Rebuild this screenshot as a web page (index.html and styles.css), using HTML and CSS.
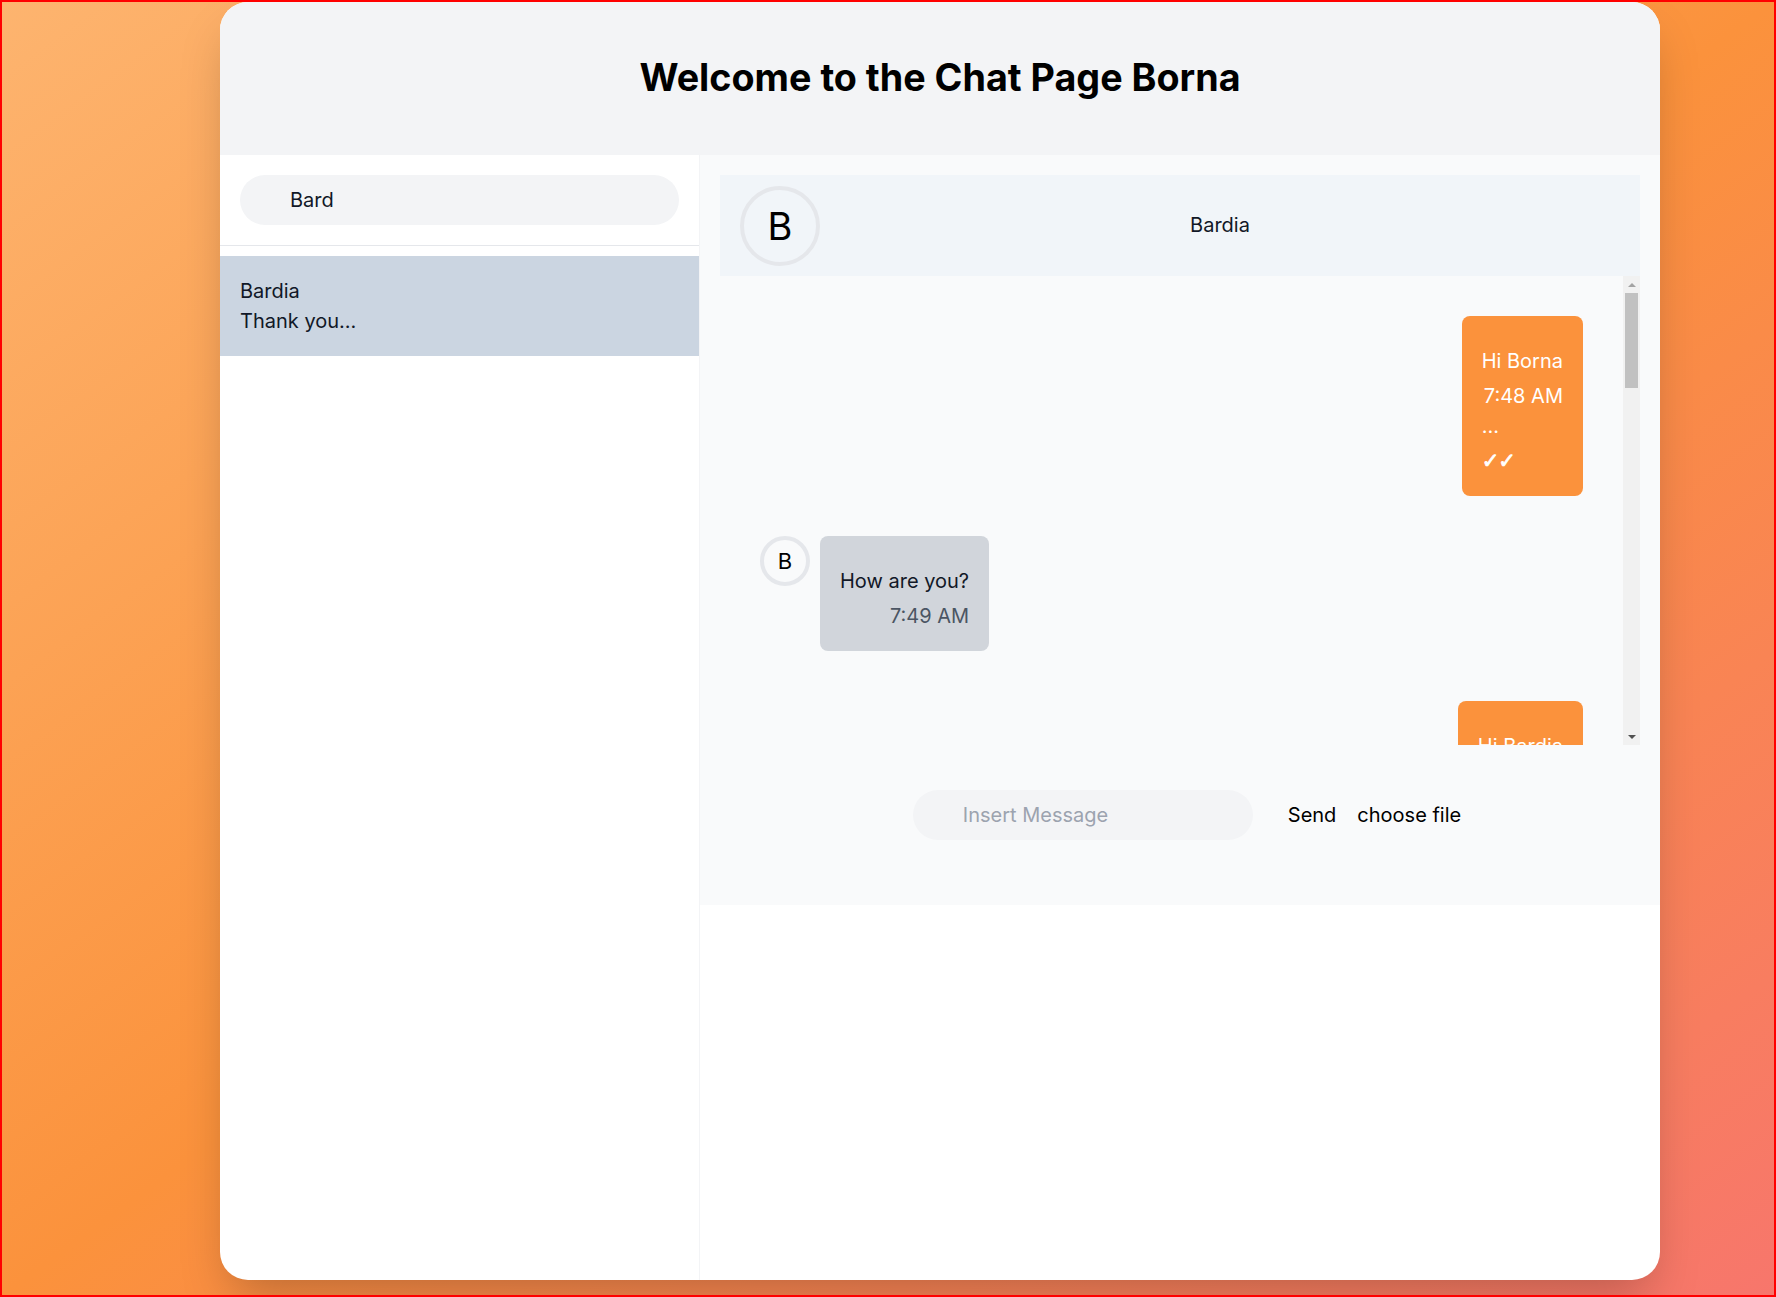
FILE: index.html
```html
<!DOCTYPE html>
<html lang="en">
<head>
<meta charset="utf-8">
<title>Chat Page</title>
<link rel="stylesheet" href="styles.css">
</head>
<body>
<div class="card">
  <header class="card-header">
    <h1 class="title">Welcome to the Chat Page Borna</h1>
  </header>
  <div class="card-body">
    <aside class="sidebar">
      <div class="search-wrap">
        <input class="search" type="text" value="Bard">
      </div>
      <ul class="contacts">
        <li class="contact active">
          <div class="contact-name">Bardia</div>
          <div class="contact-last">Thank you...</div>
        </li>
      </ul>
    </aside>
    <section class="chat">
      <div class="chat-header">
        <div class="avatar avatar-lg">B</div>
        <div class="chat-title">Bardia</div>
      </div>
      <div class="messages-wrap">
        <div class="messages">
          <div class="row out">
            <div class="bubble">
              <div class="msg-text">Hi Borna</div>
              <div class="msg-time">7:48 AM</div>
              <div class="msg-status">...</div>
              <div class="msg-check">✓✓</div>
            </div>
          </div>
          <div class="row in">
            <div class="avatar avatar-sm">B</div>
            <div class="bubble">
              <div class="msg-text">How are you?</div>
              <div class="msg-time">7:49 AM</div>
            </div>
          </div>
          <div class="row out">
            <div class="bubble">
              <div class="msg-text">Hi Bardia</div>
              <div class="msg-time">7:50 AM</div>
              <div class="msg-status">...</div>
              <div class="msg-check">✓✓</div>
            </div>
          </div>
          <div class="row in">
            <div class="avatar avatar-sm">B</div>
            <div class="bubble">
              <div class="msg-text">I'm fine</div>
              <div class="msg-time">7:51 AM</div>
            </div>
          </div>
          <div class="row out">
            <div class="bubble">
              <div class="msg-text">Thank you</div>
              <div class="msg-time">7:52 AM</div>
              <div class="msg-status">...</div>
              <div class="msg-check">✓✓</div>
            </div>
          </div>
        </div>
        <div class="scrollbar" aria-hidden="true">
          <div class="sb-btn"><span class="arrow-up"></span></div>
          <div class="sb-track"><div class="sb-thumb"></div></div>
          <div class="sb-btn"><span class="arrow-down"></span></div>
        </div>
      </div>
      <form class="composer">
        <input class="composer-input" type="text" placeholder="Insert Message">
        <button class="send" type="button">Send</button>
        <label class="file">choose file<input class="file-input" type="file"></label>
      </form>
    </section>
  </div>
</div>
</body>
</html>
```

FILE: styles.css
```css
* {
  box-sizing: border-box;
}

html,
body {
  margin: 0;
  height: 100%;
}

body {
  border: 2px solid #ff0000;
  background: linear-gradient(to bottom right, #fdb46f, #fb923c, #f7766c);
  font-family: Inter, "Noto Sans", sans-serif;
  color: #111827;
  overflow: hidden;
}

.card {
  margin-left: 218px;
  width: 1440px;
  height: 1278px;
  background: #ffffff;
  border-radius: 28px;
  overflow: hidden;
  box-shadow: 0 25px 50px -12px rgba(0, 0, 0, 0.25);
  display: flex;
  flex-direction: column;
}

.card-header {
  height: 153px;
  flex: none;
  background: #f3f4f6;
  display: flex;
  align-items: center;
  justify-content: center;
  padding-bottom: 4px;
}

.title {
  margin: 0;
  font-size: 37.7px;
  font-weight: 700;
  color: #000000;
}

.card-body {
  flex: 1;
  display: flex;
  align-items: flex-start;
  min-height: 0;
}

.sidebar {
  width: 480px;
  flex: none;
  align-self: stretch;
  border-right: 1px solid #f3f4f6;
}

.search-wrap {
  padding: 20px;
  border-bottom: 1px solid #e5e7eb;
}

.search {
  display: block;
  width: 100%;
  height: 50px;
  border: none;
  border-radius: 9999px;
  background: #f3f4f6;
  padding: 0 0 0 50px;
  font-family: inherit;
  font-size: 20px;
  color: #111827;
  outline: none;
}

.contacts {
  list-style: none;
  margin: 10px 0 0;
  padding: 0;
}

.contact {
  padding: 20px;
  font-size: 20px;
  line-height: 30px;
  color: #111827;
}

.contact.active {
  background: #cbd5e1;
}

.chat {
  flex: 1;
  height: 750px;
  background: #f9fafb;
  padding: 20px 20px 0;
}

.chat-header {
  height: 101px;
  background: #f1f5f9;
  display: flex;
  align-items: center;
  padding: 0 20px;
}

.avatar {
  flex: none;
  border-radius: 50%;
  border: 4px solid #e5e7eb;
  display: flex;
  align-items: center;
  justify-content: center;
  color: #000000;
  background: transparent;
}

.avatar-lg {
  width: 80px;
  height: 80px;
  font-size: 38px;
}

.avatar-sm {
  width: 50px;
  height: 50px;
  font-size: 22px;
}

.chat-title {
  flex: 1;
  text-align: center;
  font-size: 20px;
  color: #111827;
  padding-bottom: 2px;
}

.messages-wrap {
  height: 469px;
  display: flex;
}

.messages {
  flex: 1;
  overflow: hidden;
  padding: 40px;
}

.scrollbar {
  width: 17px;
  flex: none;
  background: #f1f1f1;
  display: flex;
  flex-direction: column;
}

.sb-btn {
  height: 17px;
  flex: none;
  display: flex;
  align-items: center;
  justify-content: center;
}

.arrow-up {
  width: 0;
  height: 0;
  border-left: 4px solid transparent;
  border-right: 4px solid transparent;
  border-bottom: 4px solid #a3a3a3;
}

.arrow-down {
  width: 0;
  height: 0;
  border-left: 4px solid transparent;
  border-right: 4px solid transparent;
  border-top: 4px solid #505050;
}

.sb-track {
  flex: 1;
  padding: 0 2px;
}

.sb-thumb {
  height: 95px;
  background: #c1c1c1;
}

.row {
  display: flex;
  margin-bottom: 40px;
}

.row.out {
  justify-content: flex-end;
}

.row.in {
  align-items: flex-start;
  gap: 10px;
  margin-bottom: 50px;
}

.bubble {
  padding: 20px;
  border-radius: 8px;
  font-size: 20px;
  line-height: 30px;
}

.row.out .bubble {
  background: #fb923c;
  color: #ffffff;
}

.row.in .bubble {
  background: #d1d5db;
  color: #111827;
}

.msg-text {
  margin-top: 10px;
}

.msg-time {
  margin-top: 5px;
  text-align: right;
}

.row.in .msg-time {
  color: #4b5563;
}

.msg-check {
  margin-top: 5px;
  font-family: "DejaVu Sans", sans-serif;
  font-size: 21px;
  font-weight: 700;
  letter-spacing: -1px;
  -webkit-text-stroke: 0.8px #ffffff;
}

.composer {
  margin: 45px 0 0;
  padding-left: 14px;
  display: flex;
  align-items: center;
  justify-content: center;
}

.composer-input {
  width: 340px;
  height: 50px;
  border: none;
  border-radius: 9999px;
  background: #f3f4f6;
  padding: 0 0 0 50px;
  font-family: inherit;
  font-size: 20px;
  color: #111827;
  outline: none;
}

.composer-input::placeholder {
  color: #9ca3af;
}

.send {
  margin-left: 35px;
  padding: 0;
  border: none;
  background: none;
  font-family: inherit;
  font-size: 20px;
  color: #000000;
}

.file {
  margin-left: 21px;
  font-size: 20px;
  color: #000000;
}

.file-input {
  display: none;
}
```
